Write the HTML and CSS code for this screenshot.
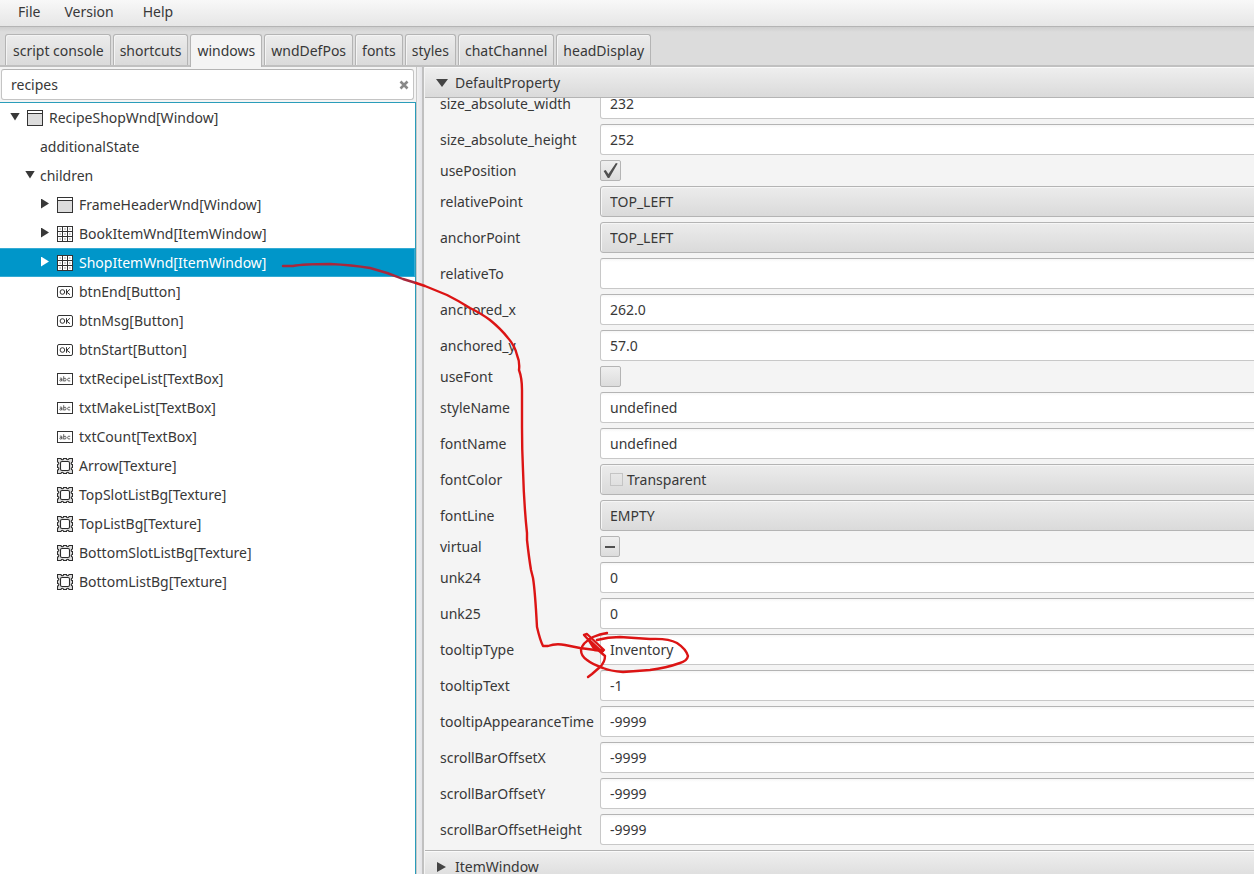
FILE: index.html
```html
<!DOCTYPE html>
<html lang="en">
<head>
<meta charset="utf-8">
<title>Interface editor</title>
<link rel="stylesheet" href="styles.css">
</head>
<body>
<svg class="defs" aria-hidden="true">
  <symbol id="i-window" viewBox="0 0 16 16"><rect x=".5" y=".5" width="15" height="15" fill="#dcdcdc" stroke="#333"/><path d="M1 1h14v2.500H1z" fill="#fff"/><path d="M1 3.500h14" stroke="#333"/></symbol>
  <symbol id="i-grid" viewBox="0 0 16 16"><rect x=".5" y=".5" width="15" height="15" fill="#fff" stroke="#333"/><path d="M3.200 2v12M8 2v12M12.800 2v12" stroke="#c8c8c8" stroke-width="1.600" stroke-dasharray="2 3"/><path d="M5.500 0v16M10.500 0v16M0 5.500h16M0 10.500h16" stroke="#333"/></symbol>
  <symbol id="i-button" viewBox="0 0 16 16"><rect x=".5" y="2.500" width="15" height="11" rx="1.500" fill="#fff" stroke="#333"/><ellipse cx="5.400" cy="8" rx="2.300" ry="2.300" fill="none" stroke="#333"/><path d="M9.500 5.200v5.600M12.900 5.300L9.800 8.200l3.200 2.500" fill="none" stroke="#333"/></symbol>
  <symbol id="i-text" viewBox="0 0 16 16"><rect x=".5" y="2.500" width="15" height="11" fill="#fff" stroke="#333"/><g fill="none" stroke="#555" stroke-width=".9"><path d="M2.800 7.200q2.200-.8 2.200.8v2.300M5 8.500q-2.500-.2-2.300 1 .5 1.200 2.300-.1"/><path d="M6.700 5.200v5.100M6.700 7.500q2.400-1 2.400 1.100t-2.400 1.300"/><path d="M13.200 7.300q-2.600-.8-2.600 1.300t2.600 1.300"/></g></symbol>
  <symbol id="i-texture" viewBox="0 0 16 16"><path d="M.5.5H4q0 1.300 1.300 1.300T6.500.5h3q0 1.300 1.200 1.300T12 .5h3.500V4q-1.300 0-1.300 1.300t1.300 1.200v3q-1.300 0-1.300 1.200t1.300 1.300v3.500H12q0-1.300-1.300-1.300T9.500 15.500h-3q0-1.300-1.200-1.300T4 15.500H.5V12q1.300 0 1.300-1.300T.5 9.500v-3q1.300 0 1.300-1.200T.5 4z" fill="#e0e0e0" stroke="#2c2c2c" stroke-width="1.100"/><rect x="3.500" y="3.500" width="9" height="9" rx="1.500" fill="#fff" stroke="#2c2c2c" stroke-width="1.100"/></symbol>
</svg>

<nav class="menubar" aria-label="Main menu">
  <button class="menu" type="button">File</button>
  <button class="menu menu-wide" type="button">Version</button>
  <button class="menu" type="button">Help</button>
</nav>

<div class="tabs" role="tablist">
  <button class="tab" type="button" role="tab">script console</button>
  <button class="tab" type="button" role="tab">shortcuts</button>
  <button class="tab tab-active" type="button" role="tab" aria-selected="true">windows</button>
  <button class="tab" type="button" role="tab">wndDefPos</button>
  <button class="tab" type="button" role="tab">fonts</button>
  <button class="tab" type="button" role="tab">styles</button>
  <button class="tab" type="button" role="tab">chatChannel</button>
  <button class="tab" type="button" role="tab">headDisplay</button>
</div>

<main class="workspace">
  <section class="browser">
    <div class="search">
      <input class="search-input" type="text" value="recipes" aria-label="Search windows">
      <button class="search-clear" type="button" aria-label="Clear"><svg width="10" height="10" viewBox="0 0 10 10"><path d="M1.500 1.500l7 7M8.500 1.500l-7 7" stroke="#888" stroke-width="2.600"/></svg></button>
    </div>
    <ul class="tree" role="tree">
      <li role="treeitem"><div class="node"><span class="arrow open"></span><svg class="icon"><use href="#i-window"/></svg>RecipeShopWnd[Window]</div>
        <ul>
          <li role="treeitem"><div class="node"><span class="arrow"></span>additionalState</div></li>
          <li role="treeitem"><div class="node"><span class="arrow open"></span>children</div>
            <ul>
              <li role="treeitem"><div class="node"><span class="arrow closed"></span><svg class="icon"><use href="#i-window"/></svg>FrameHeaderWnd[Window]</div></li>
              <li role="treeitem"><div class="node"><span class="arrow closed"></span><svg class="icon"><use href="#i-grid"/></svg>BookItemWnd[ItemWindow]</div></li>
              <li role="treeitem" aria-selected="true"><div class="node selected"><span class="arrow closed"></span><svg class="icon"><use href="#i-grid"/></svg>ShopItemWnd[ItemWindow]</div></li>
              <li role="treeitem"><div class="node"><span class="arrow"></span><svg class="icon"><use href="#i-button"/></svg>btnEnd[Button]</div></li>
              <li role="treeitem"><div class="node"><span class="arrow"></span><svg class="icon"><use href="#i-button"/></svg>btnMsg[Button]</div></li>
              <li role="treeitem"><div class="node"><span class="arrow"></span><svg class="icon"><use href="#i-button"/></svg>btnStart[Button]</div></li>
              <li role="treeitem"><div class="node"><span class="arrow"></span><svg class="icon"><use href="#i-text"/></svg>txtRecipeList[TextBox]</div></li>
              <li role="treeitem"><div class="node"><span class="arrow"></span><svg class="icon"><use href="#i-text"/></svg>txtMakeList[TextBox]</div></li>
              <li role="treeitem"><div class="node"><span class="arrow"></span><svg class="icon"><use href="#i-text"/></svg>txtCount[TextBox]</div></li>
              <li role="treeitem"><div class="node"><span class="arrow"></span><svg class="icon"><use href="#i-texture"/></svg>Arrow[Texture]</div></li>
              <li role="treeitem"><div class="node"><span class="arrow"></span><svg class="icon"><use href="#i-texture"/></svg>TopSlotListBg[Texture]</div></li>
              <li role="treeitem"><div class="node"><span class="arrow"></span><svg class="icon"><use href="#i-texture"/></svg>TopListBg[Texture]</div></li>
              <li role="treeitem"><div class="node"><span class="arrow"></span><svg class="icon"><use href="#i-texture"/></svg>BottomSlotListBg[Texture]</div></li>
              <li role="treeitem"><div class="node"><span class="arrow"></span><svg class="icon"><use href="#i-texture"/></svg>BottomListBg[Texture]</div></li>
            </ul>
          </li>
        </ul>
      </li>
    </ul>
  </section>

  <div class="divider"></div>

  <section class="properties">
    <button class="section-title" type="button" aria-expanded="true"><svg width="12" height="10" viewBox="0 0 12 10"><path d="M0 1h12L6 9z" fill="#444"/></svg>DefaultProperty</button>
    <div class="section-body">
      <form class="fields">
        <label for="p1">size_absolute_width</label><input class="field" id="p1" type="text" value="232">
        <label for="p2">size_absolute_height</label><input class="field" id="p2" type="text" value="252">
        <label for="p3">usePosition</label><input class="check" id="p3" type="checkbox" checked>
        <label for="p4">relativePoint</label><select class="field combo" id="p4"><option>TOP_LEFT</option></select>
        <label for="p5">anchorPoint</label><select class="field combo" id="p5"><option>TOP_LEFT</option></select>
        <label for="p6">relativeTo</label><input class="field" id="p6" type="text">
        <label for="p7">anchored_x</label><input class="field" id="p7" type="text" value="262.0">
        <label for="p8">anchored_y</label><input class="field" id="p8" type="text" value="57.0">
        <label for="p9">useFont</label><input class="check" id="p9" type="checkbox">
        <label for="p10">styleName</label><input class="field" id="p10" type="text" value="undefined">
        <label for="p11">fontName</label><input class="field" id="p11" type="text" value="undefined">
        <label for="p12">fontColor</label><button class="field combo color" id="p12" type="button"><span class="swatch"></span>Transparent</button>
        <label for="p13">fontLine</label><select class="field combo" id="p13"><option>EMPTY</option></select>
        <label for="p14">virtual</label><input class="check mixed" id="p14" type="checkbox" aria-checked="mixed">
        <label for="p15">unk24</label><input class="field" id="p15" type="text" value="0">
        <label for="p16">unk25</label><input class="field" id="p16" type="text" value="0">
        <label for="p17">tooltipType</label><input class="field" id="p17" type="text" value="Inventory">
        <label for="p18">tooltipText</label><input class="field" id="p18" type="text" value="-1">
        <label for="p19">tooltipAppearanceTime</label><input class="field" id="p19" type="text" value="-9999">
        <label for="p20">scrollBarOffsetX</label><input class="field" id="p20" type="text" value="-9999">
        <label for="p21">scrollBarOffsetY</label><input class="field" id="p21" type="text" value="-9999">
        <label for="p22">scrollBarOffsetHeight</label><input class="field" id="p22" type="text" value="-9999">
      </form>
    </div>
    <button class="section-title section-next" type="button" aria-expanded="false"><svg width="12" height="10" viewBox="0 0 12 10"><path d="M1 0v10l9-5z" fill="#444"/></svg>ItemWindow</button>
  </section>
</main>

<svg class="markup" width="1254" height="874" viewBox="0 0 1254 874" aria-hidden="true">
  <path class="faded" d="M283 266L293 266Q303 264 330 264Q352 265 370 268Q386 272 403 279L416 283"/>
  <path d="M416 283L425 286L447 295Q459 301 470 308Q482 314 490 320Q501 329 508 338Q515 346 517 355Q520 362 519 370Q522 378 522 390L522 427Q522 450 523 470Q524 505 527 533L527 540Q529 558 531 570L533 578Q535 590 537 627Q540 640 543 646L548 646Q556 643 565 645L580 648L603 651"/>
  <path d="M597 640Q608 637 620 637L650 639Q668 638 677 643Q686 649 688 656Q687 661 680 663Q666 668 650 670L623 672Q610 671 603 668Q592 664 587 660Q581 656 581 650Q582 643 593 637Q600 634 607 633"/>
  <path d="M588 677L592 674L600 667Q605 662 605 656L597 649L584 635L587 634L604 650L595 650L588 639L602 652"/>
</svg>
</body>
</html>
```
FILE: styles.css
```css
* {
  box-sizing: border-box;
}

body {
  margin: 0;
  height: 100vh;
  display: flex;
  flex-direction: column;
  overflow: hidden;
  background: #f4f4f4;
  color: #383838;
  font: 14px/20px "Noto Sans", "Open Sans", sans-serif;
}

button,
input,
select {
  font: inherit;
  color: inherit;
  margin: 0;
}

.defs {
  position: absolute;
  width: 0;
  height: 0;
}

.menubar {
  flex: none;
  display: flex;
  height: 27px;
  padding-left: 9px;
  padding-bottom: 2px;
  background: linear-gradient(#f8f8f8, #e6e6e6);
  border-bottom: 1px solid #b4b4b4;
}

.menu {
  padding: 0 9px;
  margin-right: 6px;
  border: 0;
  background: none;
}

.menu-wide {
  padding-right: 14px;
}

.tabs {
  flex: none;
  display: flex;
  align-items: flex-end;
  gap: 2px;
  height: 40px;
  padding: 0 5px;
  background: linear-gradient(#cecece, #dcdcdc 5px);
  border-bottom: 2px solid #c0c0c0;
}

.tab {
  height: 31px;
  padding: 2px 6px 0 7px;
  border: 1px solid #b4b4b4;
  border-bottom: 0;
  border-radius: 3px 3px 0 0;
  background: linear-gradient(#ececec, #dadada);
  box-shadow: inset 1px 1px #f4f4f4;
}

.tab + .tab {
  padding-left: 6px;
}

.tab-active {
  height: 33px;
  margin-bottom: -2px;
  padding-bottom: 2px;
  background: #f4f4f4;
}

.workspace {
  flex: 1;
  min-height: 0;
  display: grid;
  grid-template-columns: 416px 9px minmax(0, 1fr);
}

.browser {
  display: flex;
  flex-direction: column;
  min-height: 0;
}

.search {
  display: flex;
  align-items: center;
  height: 31px;
  margin: 2px 2px 2px 1px;
  padding: 0 4px 0 9px;
  border: 1px solid #c4c4c4;
  border-top-color: #b4b4b4;
  border-radius: 3px;
  background: #fff;
}

.search-input {
  flex: 1;
  min-width: 0;
  padding: 0;
  border: 0;
  outline: 0;
  background: none;
}

.search-clear {
  display: flex;
  padding: 0;
  border: 0;
  background: none;
}

.tree {
  flex: 1;
  min-height: 0;
  overflow: hidden;
  background: #fff;
  border: solid #2a9dba;
  border-width: 1px 1px 0 0;
}

.tree,
.tree ul {
  margin: 0;
  padding: 0;
  list-style: none;
}

.node {
  display: flex;
  align-items: center;
  height: 29px;
  padding-left: 10px;
}

.tree ul .node {
  padding-left: 25px;
}

.tree ul ul .node {
  padding-left: 40px;
}

.tree .selected {
  background: #0096c9;
  color: #fff;
  border: 1px solid #34abd4;
  border-left: 0;
}

.arrow {
  width: 15px;
  height: 14px;
}

.arrow::before {
  content: "";
  display: block;
  background: currentColor;
}

.open::before {
  width: 10px;
  height: 8px;
  margin-top: 2px;
  clip-path: polygon(0 0, 100% 0, 50% 100%);
}

.closed::before {
  width: 8px;
  height: 10px;
  margin-top: 1px;
  margin-left: 1px;
  clip-path: polygon(0 0, 100% 50%, 0 100%);
}

.icon {
  width: 16px;
  height: 16px;
  margin: 0 6px 0 2px;
}

.divider {
  background: linear-gradient(90deg, #c8c8c8 1px, #f0f0f0 1px, #e4e4e8 6px, #c0c0c0 6px, #c0c0c0 8px, #f4f4f4 8px);
}

.properties {
  display: flex;
  flex-direction: column;
  min-width: 0;
  min-height: 0;
  overflow: hidden;
}

.section-title {
  flex: none;
  display: flex;
  align-items: center;
  gap: 7px;
  height: 31px;
  padding: 2px 11px 0;
  border: 0;
  border-bottom: 1px solid #b4b4b4;
  background: linear-gradient(#efefef, #dadada);
  box-shadow: inset 0 1px #fafafa;
}

.section-next {
  height: 33px;
  padding-top: 1px;
  border-top: 1px solid #b4b4b4;
}

.section-body {
  flex: none;
  overflow: hidden;
  padding-left: 15px;
}

/* The list is scrolled part of the way past its first row. */
.fields {
  display: grid;
  grid-template-columns: 155px minmax(0, 1fr);
  gap: 5px;
  align-items: center;
  margin: -10px -6px 5px 0;
}

.field {
  width: 100%;
  height: 31px;
  padding: 0 9px;
  border: 1px solid #c8c8c8;
  border-top-color: #b4b4b4;
  border-radius: 3px;
  outline: 0;
  background: linear-gradient(#f6f6f6, #fff 3px);
}

.combo {
  appearance: none;
  text-align: left;
  border-color: #b4b4b4;
  background: linear-gradient(#ececec, #dadada);
  box-shadow: inset 1px 1px #f6f6f6;
}

.color {
  display: flex;
  align-items: center;
  gap: 4px;
}

.swatch {
  width: 13px;
  height: 13px;
  border: 1px solid #c4c4c4;
}

.check {
  appearance: none;
  width: 21px;
  height: 21px;
  border: 1px solid #b4b4b4;
  border-radius: 2px;
  background: linear-gradient(#efefef, #dcdcdc);
  display: grid;
  place-items: center;
}

.check:checked::before {
  content: "";
  width: 15px;
  height: 15px;
  background: #505050;
  clip-path: polygon(4% 54%, 18% 46%, 36% 74%, 86% 0, 98% 4%, 42% 100%, 32% 100%);
}

.mixed {
  width: 20px;
}

.mixed::before {
  content: "";
  width: 10px;
  height: 2px;
  background: #505050;
}

.markup {
  position: absolute;
  top: 0;
  left: 0;
  pointer-events: none;
  fill: none;
  stroke: #dc1414;
  stroke-width: 2.400;
  stroke-linejoin: round;
  stroke-linecap: round;
}

.faded {
  stroke: #a8283c;
}
```
